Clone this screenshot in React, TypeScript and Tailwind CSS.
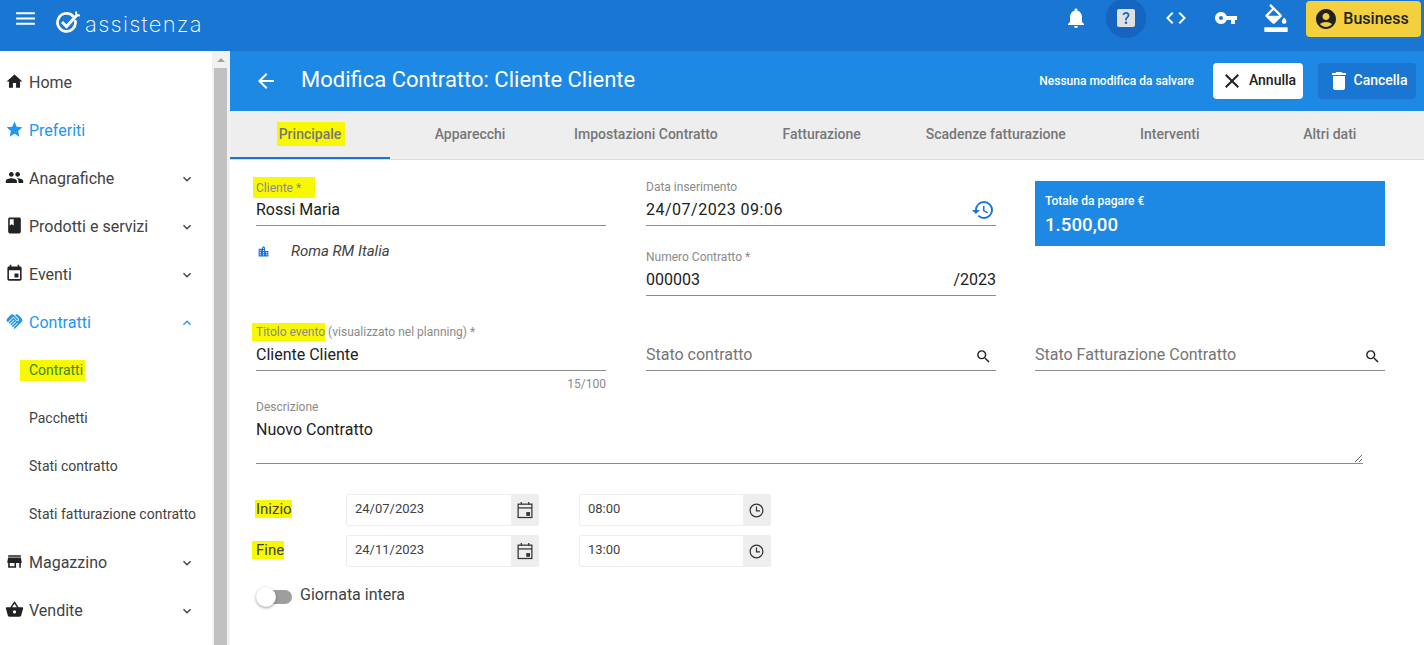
import type { ReactNode } from "react";
import {
  MdAccountCircle,
  MdArrowBack,
  MdBook,
  MdClose,
  MdCode,
  MdDelete,
  MdEvent,
  MdExpandLess,
  MdExpandMore,
  MdFormatColorFill,
  MdHandshake,
  MdHelpCenter,
  MdHistory,
  MdHome,
  MdLocationCity,
  MdMenu,
  MdNotifications,
  MdPeople,
  MdSearch,
  MdShoppingBasket,
  MdStar,
  MdStore,
  MdVpnKey,
} from "react-icons/md";

const tabs = [
  "Principale",
  "Apparecchi",
  "Impostazioni Contratto",
  "Fatturazione",
  "Scadenze fatturazione",
  "Interventi",
  "Altri dati",
];

const Mark = ({ children, className = "" }: { children: ReactNode; className?: string }) => (
  <span className={`bg-[#f8f800] ${className}`}>{children}</span>
);

const Logo = () => (
  <svg width="26" height="26" viewBox="0 0 26 26" fill="none" stroke="white" strokeWidth="2.7" className="shrink-0">
    <path d="M17 7.2A9 9 0 1 0 19.4 12" strokeLinecap="round" />
    <path d="M6 13l4.5 4.5L21 6" strokeWidth="3" />
    <path d="M20 2.5l.5 3.5 3.5.5" strokeWidth="2" />
  </svg>
);

const ClockIcon = () => (
  <svg width="17" height="17" viewBox="0 0 24 24" fill="none" stroke="currentColor" strokeWidth="1.7">
    <circle cx="12" cy="12" r="9" />
    <path d="M12 6.5v6h5" />
  </svg>
);

const CalendarIcon = () => (
  <svg width="20" height="20" viewBox="0 0 24 24" fill="none" stroke="currentColor" strokeWidth="1.5">
    <rect x="3.75" y="5" width="16.5" height="16" />
    <path d="M3.75 9.5h16.5" />
    <path d="M7.5 2.5v3M16.5 2.5v3" />
    <rect x="13.5" y="14.5" width="4.5" height="4.5" fill="currentColor" stroke="none" />
  </svg>
);

const NavItem = ({
  icon,
  label,
  open,
  active,
}: {
  icon: ReactNode;
  label: string;
  open?: boolean;
  active?: boolean;
}) => (
  <div className={`flex h-12 items-center pl-[5px] pr-[17px] ${active ? "text-[#2196f3]" : "text-[#424242]"}`}>
    <span className={`mb-[3px] flex w-[24px] justify-start text-[19px] ${active ? "" : "text-[#222]"}`}>{icon}</span>
    <span className="text-[16px]">{label}</span>
    {open !== undefined && (
      <span className="ml-auto text-[16px]">{open ? <MdExpandLess /> : <MdExpandMore />}</span>
    )}
  </div>
);

const SubItem = ({ children }: { children: ReactNode }) => (
  <div className="flex h-12 items-center pb-[2px] pl-[29px] text-[14px] text-[#424242]">{children}</div>
);

const Field = ({
  label,
  children,
  className = "",
}: {
  label: ReactNode;
  children: ReactNode;
  className?: string;
}) => (
  <div className={`w-[350px] ${className}`}>
    <div className="h-[15px] text-[12px] leading-[15px] text-[#8a8a8a]">{label}</div>
    <div className="flex h-[31px] items-center justify-between border-b border-[#8c8c8c] text-[16px] text-[#212121]">
      {children}
    </div>
  </div>
);

const DateInput = ({
  value,
  icon,
  width,
}: {
  value: string;
  icon: ReactNode;
  width: string;
}) => (
  <div className={`flex h-[32px] items-stretch rounded-[2px] border border-[#eeeeee] ${width}`}>
    <span className="flex flex-1 items-center pb-[2px] pl-[8px] text-[13px] text-[#424242]">{value}</span>
    <span className="flex w-[27px] items-center justify-center bg-[#eeeeee] text-[#333]">{icon}</span>
  </div>
);

export default function App() {
  return (
    <div className="flex h-[645px] flex-col overflow-hidden bg-white font-['Roboto',sans-serif]">
      <header className="flex h-[51px] shrink-0 items-start bg-[#1976d2] text-white">
        <span className="ml-[13px] mt-[6px] text-[25px]">
          <MdMenu />
        </span>
        <div className="ml-[18px] mt-[9px] flex items-center">
          <Logo />
          <span className="ml-[3px] mt-[4px] font-['Inter',sans-serif] text-[22px] font-extralight leading-none tracking-[1.3px]">
            assistenza
          </span>
        </div>
        <div className="ml-auto mr-[3px] flex items-start">
          <span className="-mt-[2px] flex h-10 w-[50px] items-center justify-center text-[24px]">
            <MdNotifications />
          </span>
          <span className="-mt-[2px] flex h-10 w-[50px] items-center justify-center">
            <span className="flex h-10 w-10 items-center justify-center rounded-full bg-[#1565c0] text-[24px] text-[#e0e0e0]">
              <MdHelpCenter />
            </span>
          </span>
          <span className="-mt-[2px] flex h-10 w-[50px] items-center justify-center text-[24px]">
            <MdCode />
          </span>
          <span className="-mt-[2px] flex h-10 w-[50px] items-center justify-center text-[24px]">
            <MdVpnKey />
          </span>
          <span className="-mt-[2px] flex h-10 w-[50px] items-center justify-center text-[28px]">
            <MdFormatColorFill />
          </span>
          <button className="ml-[5px] mt-[1px] flex h-[36px] w-[115px] items-center justify-center gap-[5px] rounded-[4px] bg-[#f4d03f] pr-[4px] text-[16px] font-medium text-[#212121]">
            <MdAccountCircle className="text-[24px]" />
            Business
          </button>
        </div>
      </header>

      <div className="flex min-h-0 flex-1">
        <aside className="flex w-[230px] shrink-0">
          <nav className="w-[212px] pt-[8px]">
            <NavItem icon={<MdHome />} label="Home" />
            <NavItem icon={<MdStar />} label="Preferiti" active />
            <NavItem icon={<MdPeople />} label="Anagrafiche" open={false} />
            <NavItem icon={<MdBook />} label="Prodotti e servizi" open={false} />
            <NavItem icon={<MdEvent />} label="Eventi" open={false} />
            <NavItem icon={<MdHandshake />} label="Contratti" open active />
            <SubItem>
              <span className="-ml-[9px] bg-[#f8f800] pl-[9px] pr-[2px] text-[#3d8b00]">Contratti</span>
            </SubItem>
            <SubItem>Pacchetti</SubItem>
            <SubItem>Stati contratto</SubItem>
            <SubItem>Stati fatturazione contratto</SubItem>
            <NavItem icon={<MdStore />} label="Magazzino" open={false} />
            <NavItem icon={<MdShoppingBasket />} label="Vendite" open={false} />
          </nav>
          <div className="flex w-[18px] flex-col bg-[#f1f1f1] pl-[2px] pr-[3px]">
            <div className="flex h-[17px] items-center justify-center">
              <span className="h-0 w-0 border-x-[4px] border-b-[4px] border-x-transparent border-b-[#a3a3a3]" />
            </div>
            <div className="flex-1 bg-[#c1c1c1]" />
          </div>
        </aside>

        <main className="min-w-0 flex-1">
          <div className="flex h-[60px] items-center bg-[#1e88e5] text-white">
            <span className="ml-[24px] text-[24px]">
              <MdArrowBack />
            </span>
            <h1 className="mb-[3px] ml-[23px] text-[22px] font-normal">Modifica Contratto: Cliente Cliente</h1>
            <span className="ml-auto text-[12px] font-medium">Nessuna modifica da salvare</span>
            <button className="ml-[19px] flex h-[36px] w-[90px] items-center justify-center gap-[5px] rounded-[4px] bg-white text-[14px] font-medium text-[#212121]">
              <MdClose className="text-[24px]" />
              <span className="mb-[2px]">Annulla</span>
            </button>
            <button className="ml-[15px] mr-[8px] flex h-[36px] w-[98px] items-center justify-center gap-[3px] rounded-[4px] bg-[#1976d2] text-[14px] font-medium">
              <MdDelete className="text-[24px]" />
              <span className="mb-[2px]">Cancella</span>
            </button>
          </div>

          <div className="flex h-[49px] border-b border-[#dddddd] bg-[#eeeeee]">
            {tabs.map((tab, i) => (
              <div
                key={tab}
                className={`flex min-w-[160px] items-center justify-center border-b-2 px-6 text-[14px] font-medium text-[#777] ${
                  i === 0 ? "border-[#1976d2]" : "border-transparent"
                }`}
              >
                {i === 0 ? <Mark className="-ml-[2px] -mr-[4px] py-[1.5px] pl-[2px] pr-[4px]">{tab}</Mark> : tab}
              </div>
            ))}
          </div>

          <div className="pl-[26px] pt-[20px]">
            <div className="grid grid-cols-[390px_389px_350px]">
              <div>
                <Field label={<Mark className="-ml-[3px] py-[3.5px] pl-[3px] pr-[14px]">Cliente *</Mark>}>Rossi Maria</Field>
                <div className="mt-[14px] flex items-center">
                  <MdLocationCity className="ml-[1px] text-[13px] text-[#1976d2]" />
                  <span className="ml-[21px] text-[15px] italic text-[#424242]">Roma RM Italia</span>
                </div>
              </div>
              <div>
                <Field label="Data inserimento">
                  <span className="tracking-[0.5px]">24/07/2023 09:06</span>
                  <MdHistory className="mr-[1px] text-[24px] text-[#1976d2]" />
                </Field>
                <Field label="Numero Contratto *" className="mt-[24px]">
                  <span>000003</span>
                  <span>/2023</span>
                </Field>
              </div>
              <div>
                <div className="mt-[1px] flex h-[65px] flex-col justify-center bg-[#1e88e5] pl-[10px] text-white">
                  <span className="text-[12px] font-medium">Totale da pagare €</span>
                  <span className="mt-[6px] text-[18.7px] font-medium leading-none">1.500,00</span>
                </div>
              </div>
            </div>

            <div className="mt-[29px] grid grid-cols-[390px_389px_350px]">
              <div>
                <Field
                  label={
                    <>
                      <Mark className="-ml-[4px] py-[2px] pl-[4px]">Titolo evento</Mark> (visualizzato nel planning) *
                    </>
                  }
                >
                  Cliente Cliente
                </Field>
                <div className="mt-[6px] w-[350px] text-right text-[12px] leading-[14px] text-[#8a8a8a]">15/100</div>
              </div>
              <Field label="">
                <span className="text-[#757575]">Stato contratto</span>
                <MdSearch className="mr-[4px] mt-[2px] text-[17px] text-[#222]" />
              </Field>
              <Field label="">
                <span className="text-[#757575]">Stato Fatturazione Contratto</span>
                <MdSearch className="mr-[4px] mt-[2px] text-[17px] text-[#222]" />
              </Field>
            </div>

            <div className="mt-[9px] w-[1107px]">
              <div className="h-[15px] text-[12px] leading-[15px] text-[#8a8a8a]">Descrizione</div>
              <textarea
                readOnly
                defaultValue="Nuovo Contratto"
                className="block h-[49px] w-full resize-y border-b border-[#8c8c8c] pt-[3px] text-[16px] text-[#212121] outline-none"
              />
            </div>

            <div className="mt-[30px] flex flex-col gap-[9px]">
              <div className="flex items-center">
                <span className="mb-[2px] w-[90px] text-[15px] text-[#424242]">
                  <Mark className="-ml-[1px] pl-[1px]">Inizio</Mark>
                </span>
                <DateInput value="24/07/2023" icon={<CalendarIcon />} width="w-[193px]" />
                <span className="w-[40px]" />
                <DateInput value="08:00" icon={<ClockIcon />} width="w-[192px]" />
              </div>
              <div className="flex items-center">
                <span className="mb-[2px] w-[90px] text-[15px] text-[#424242]">
                  <Mark className="-ml-[4px] pl-[4px]">Fine</Mark>
                </span>
                <DateInput value="24/11/2023" icon={<CalendarIcon />} width="w-[193px]" />
                <span className="w-[40px]" />
                <DateInput value="13:00" icon={<ClockIcon />} width="w-[192px]" />
              </div>
            </div>

            <div className="mt-[16px] flex items-center">
              <div className="relative ml-[2px] h-[14px] w-[34px] rounded-full bg-[#9e9e9e]">
                <span className="absolute -left-[2px] -top-[3px] h-[20px] w-[20px] rounded-full bg-white shadow-[0_1px_3px_rgba(0,0,0,0.4)]" />
              </div>
              <span className="mb-[3px] ml-[8px] text-[16px] text-[#424242]">Giornata intera</span>
            </div>
          </div>
        </main>
      </div>
    </div>
  );
}
